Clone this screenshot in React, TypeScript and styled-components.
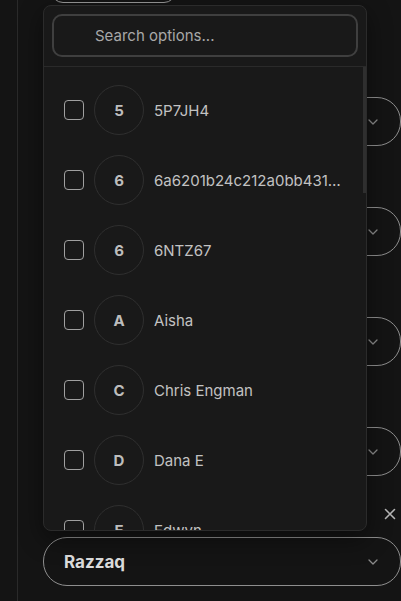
import React from "react";
import styled, { createGlobalStyle } from "styled-components";

const Global = createGlobalStyle`
  html, body { margin: 0; padding: 0; background: #141414; }
  body { font-family: Inter, "Noto Sans", sans-serif; overflow: hidden; }
  * { box-sizing: border-box; }
`;

const Page = styled.div`
  position: relative;
  height: 601px;
  padding-left: 17px;
  background: #141414;
  overflow: hidden;
`;

const Rail = styled.div`
  height: 100%;
  border-left: 1px solid #2a2a2a;
  padding-left: 25px;
  display: flex;
  flex-direction: column;
  gap: 23px;
`;

const TopButton = styled.div`
  flex: none;
  height: 40px;
  width: 125px;
  margin: -37px 0 33px 8px;
  border: 1px solid #9a9a9a;
  border-radius: 12px;
`;

const Field = styled.div`
  display: flex;
  flex-direction: column;
  gap: 8px;
`;

const LabelRow = styled.div`
  height: 30px;
  display: flex;
  align-items: center;
  justify-content: space-between;
  color: #cfcfcf;
  font-size: 14px;
  padding-right: 4px;
`;

const ClearButton = styled.span`
  display: flex;
  align-items: center;
  justify-content: center;
  width: 14px;
  height: 14px;
  color: #b0b0b0;
`;

const Select = styled.div`
  height: 49px;
  border: 1px solid #8e8e8e;
  border-radius: 24px;
  display: flex;
  align-items: center;
  justify-content: space-between;
  padding: 0 22px 0 20px;
  color: #dcdcdc;
  font-size: 17px;
  font-weight: 700;
`;

const Chevron = () => (
  <svg width="10" height="6" viewBox="0 0 10 6" fill="none">
    <path d="M1 1l4 4 4-4" stroke="#8a8a8a" strokeWidth="1.3" strokeLinecap="round" strokeLinejoin="round" />
  </svg>
);

const Popover = styled.div`
  position: absolute;
  top: 5px;
  left: 43px;
  width: 324px;
  background: #191919;
  border: 1px solid #2b2b2b;
  border-radius: 8px;
  box-shadow: 0 8px 24px rgba(0, 0, 0, 0.45);
  overflow: hidden;
`;

const SearchBar = styled.div`
  padding: 8px 8px 9px;
  border-bottom: 1px solid #2a2a2a;
`;

const SearchInput = styled.input`
  display: block;
  width: 100%;
  height: 43px;
  background: #191919;
  border: 2px solid #3f3f3f;
  border-radius: 10px;
  padding: 0 12px 0 41px;
  font-family: Inter, "Noto Sans", sans-serif;
  font-size: 15px;
  color: #dddddd;
  caret-color: #dddddd;
  outline: none;
  &::placeholder { color: #a8a8a8; }
`;

const ListWrap = styled.div`
  position: relative;
`;

const List = styled.div`
  height: 463px;
  overflow: hidden;
  padding-top: 8px;
`;

const ScrollThumb = styled.div`
  position: absolute;
  top: 0;
  right: 0;
  width: 3px;
  height: 126px;
  background: #2f2f2f;
`;

const Row = styled.div`
  height: 70px;
  display: flex;
  align-items: center;
  gap: 10px;
  padding: 0 22px 0 20px;
`;

const Checkbox = styled.span`
  flex: none;
  width: 20px;
  height: 20px;
  border: 1.5px solid #a0a0a0;
  border-radius: 4px;
`;

const Avatar = styled.span`
  flex: none;
  width: 50px;
  height: 50px;
  border-radius: 50%;
  border: 1px solid #2f2f2f;
  display: flex;
  align-items: center;
  justify-content: center;
  color: #bdbdbd;
  font-size: 15px;
  font-weight: 700;
`;

const Name = styled.span`
  flex: 1;
  min-width: 0;
  white-space: nowrap;
  overflow: hidden;
  text-overflow: ellipsis;
  color: #c2c2c2;
  font-size: 15px;
`;

const options = [
  "5P7JH4",
  "6a6201b24c212a0bb4318f2e",
  "6NTZ67",
  "Aisha",
  "Chris Engman",
  "Dana E",
  "Edwyn",
  "Fatima",
  "Gabriel",
  "Hana",
  "Isaac",
  "Jamal",
  "Keiko",
  "Liam",
  "Maya",
  "Noah",
  "Olivia",
  "Priya",
  "Quinn",
  "Razzaq",
  "Sofia",
  "Tomas",
  "Uma",
  "Victor",
];

const fields = ["Owner", "Reviewer", "Approver", "Assignee"];

export default function App() {
  return (
    <>
      <Global />
      <Page>
        <Rail>
          <TopButton />
          {fields.map((f) => (
            <Field key={f}>
              <LabelRow>{f}</LabelRow>
              <Select>
                <span />
                <Chevron />
              </Select>
            </Field>
          ))}
          <Field>
            <LabelRow>
              <span>Contact</span>
              <ClearButton>
                <svg width="12" height="12" viewBox="0 0 12 12" fill="none">
                  <path d="M1.5 1.5l9 9M10.5 1.5l-9 9" stroke="#b5b5b5" strokeWidth="1.6" strokeLinecap="round" />
                </svg>
              </ClearButton>
            </LabelRow>
            <Select>
              <span>Razzaq</span>
              <Chevron />
            </Select>
          </Field>
        </Rail>
        <Popover>
          <SearchBar>
            <SearchInput placeholder="Search options..." autoFocus />
          </SearchBar>
          <ListWrap>
            <List>
              {options.map((o, i) => (
                <Row key={i}>
                  <Checkbox />
                  <Avatar>{o[0].toUpperCase()}</Avatar>
                  <Name>{o}</Name>
                </Row>
              ))}
            </List>
            <ScrollThumb />
          </ListWrap>
        </Popover>
      </Page>
    </>
  );
}
